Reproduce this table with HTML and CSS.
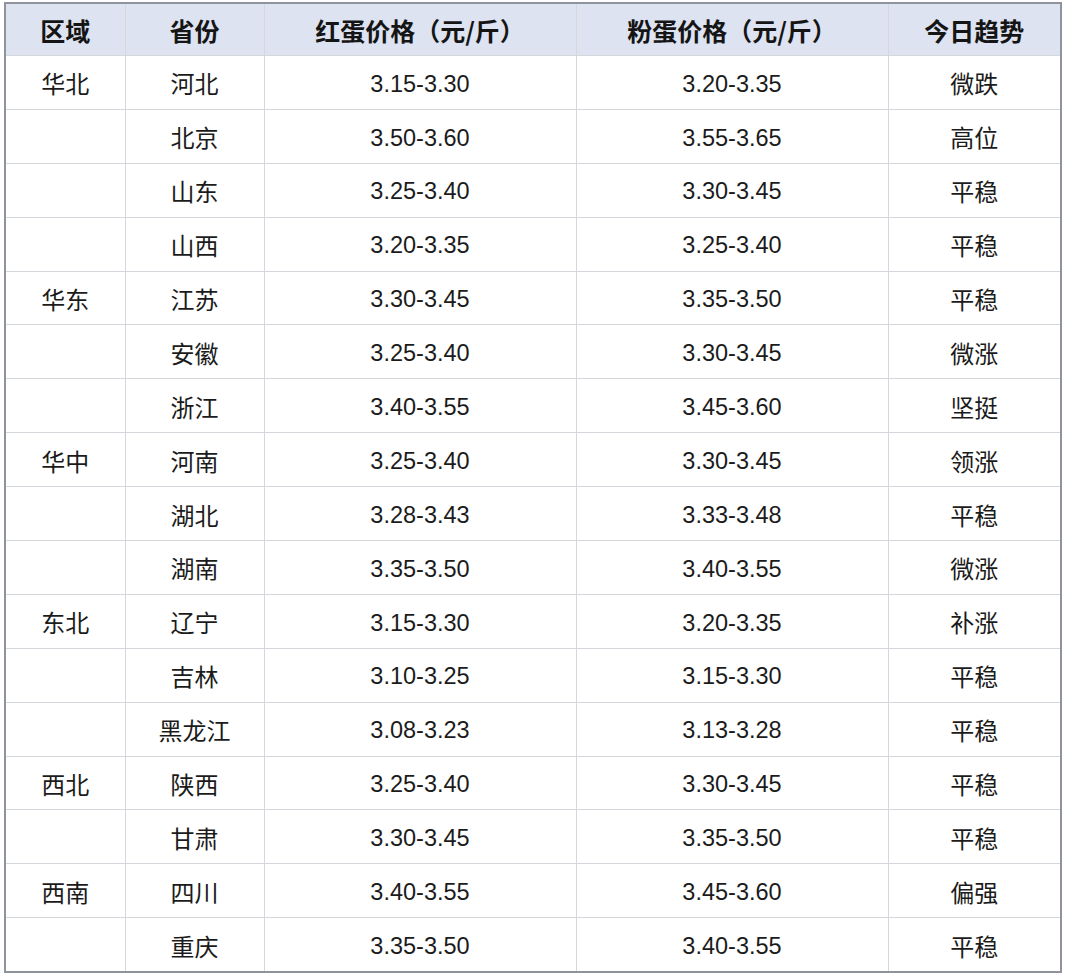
FILE: index.html
```html
<!DOCTYPE html>
<html lang="zh">
<head>
<meta charset="utf-8">
<title>鸡蛋价格</title>
<link rel="stylesheet" href="styles.css">
</head>
<body>
<div class="sheet">
<table class="price-table">
  <colgroup>
    <col class="c-region"><col class="c-prov"><col class="c-red"><col class="c-pink"><col class="c-trend">
  </colgroup>
  <thead>
    <tr><th>区域</th><th>省份</th><th>红蛋价格（元/斤）</th><th>粉蛋价格（元/斤）</th><th>今日趋势</th></tr>
  </thead>
  <tbody>
    <tr><td>华北</td><td>河北</td><td class="num">3.15-3.30</td><td class="num">3.20-3.35</td><td>微跌</td></tr>
    <tr><td></td><td>北京</td><td class="num">3.50-3.60</td><td class="num">3.55-3.65</td><td>高位</td></tr>
    <tr><td></td><td>山东</td><td class="num">3.25-3.40</td><td class="num">3.30-3.45</td><td>平稳</td></tr>
    <tr><td></td><td>山西</td><td class="num">3.20-3.35</td><td class="num">3.25-3.40</td><td>平稳</td></tr>
    <tr><td>华东</td><td>江苏</td><td class="num">3.30-3.45</td><td class="num">3.35-3.50</td><td>平稳</td></tr>
    <tr><td></td><td>安徽</td><td class="num">3.25-3.40</td><td class="num">3.30-3.45</td><td>微涨</td></tr>
    <tr><td></td><td>浙江</td><td class="num">3.40-3.55</td><td class="num">3.45-3.60</td><td>坚挺</td></tr>
    <tr><td>华中</td><td>河南</td><td class="num">3.25-3.40</td><td class="num">3.30-3.45</td><td>领涨</td></tr>
    <tr><td></td><td>湖北</td><td class="num">3.28-3.43</td><td class="num">3.33-3.48</td><td>平稳</td></tr>
    <tr><td></td><td>湖南</td><td class="num">3.35-3.50</td><td class="num">3.40-3.55</td><td>微涨</td></tr>
    <tr><td>东北</td><td>辽宁</td><td class="num">3.15-3.30</td><td class="num">3.20-3.35</td><td>补涨</td></tr>
    <tr><td></td><td>吉林</td><td class="num">3.10-3.25</td><td class="num">3.15-3.30</td><td>平稳</td></tr>
    <tr><td></td><td>黑龙江</td><td class="num">3.08-3.23</td><td class="num">3.13-3.28</td><td>平稳</td></tr>
    <tr><td>西北</td><td>陕西</td><td class="num">3.25-3.40</td><td class="num">3.30-3.45</td><td>平稳</td></tr>
    <tr><td></td><td>甘肃</td><td class="num">3.30-3.45</td><td class="num">3.35-3.50</td><td>平稳</td></tr>
    <tr><td>西南</td><td>四川</td><td class="num">3.40-3.55</td><td class="num">3.45-3.60</td><td>偏强</td></tr>
    <tr><td></td><td>重庆</td><td class="num">3.35-3.50</td><td class="num">3.40-3.55</td><td>平稳</td></tr>
  </tbody>
</table>
</div>
</body>
</html>
```

FILE: styles.css
```css
html, body {
  margin: 0;
  padding: 0;
  background: #ffffff;
}

body {
  font-family: "Noto Sans CJK SC", "Liberation Sans", sans-serif;
  color: #1b1b1b;
}

.sheet {
  padding: 2px 0 0 4px;
}

.price-table {
  border-collapse: collapse;
  border: 2px solid #8f949c;
  table-layout: fixed;
  width: 1056px;
}

.c-region { width: 120px; }
.c-prov { width: 139px; }
.c-red { width: 312px; }
.c-pink { width: 312px; }
.c-trend { width: 173px; }

.price-table th,
.price-table td {
  border: 1px solid #d4d7dc;
  text-align: center;
  padding: 0;
  white-space: nowrap;
  line-height: 1;
  vertical-align: middle;
}

.price-table th {
  height: 49px;
  padding-top: 2px;
  background: #dde3f1;
  font-weight: 700;
  font-size: 25px;
  color: #151515;
}

.price-table td {
  height: 50.9px;
  padding-top: 2px;
  font-size: 24px;
  font-weight: 400;
}

.price-table td.num {
  height: 48.9px;
  padding-top: 4px;
  font-family: "Liberation Sans", "Noto Sans CJK SC", sans-serif;
  font-size: 23.5px;
}
```
